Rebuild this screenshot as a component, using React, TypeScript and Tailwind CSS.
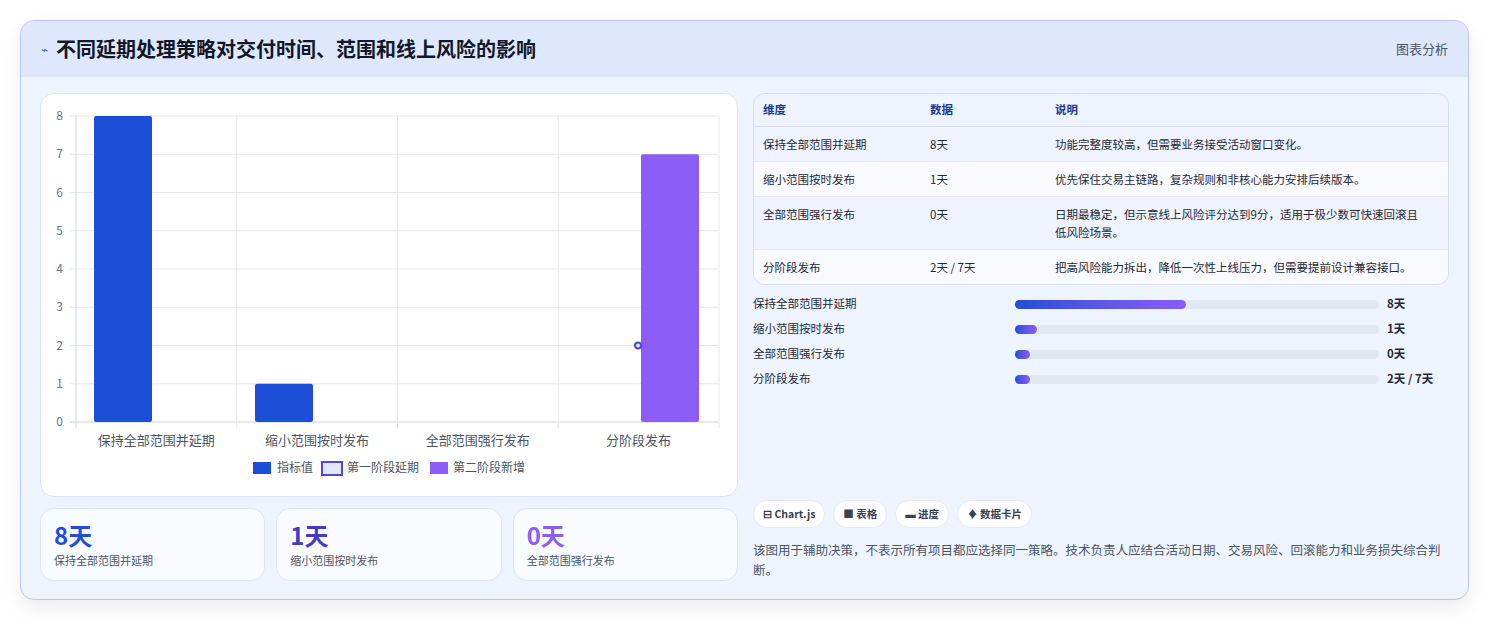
import React from "react";

const F = { fontFamily: '"Noto Sans CJK SC","Noto Sans",sans-serif' };

function Chart() {
  const x0 = 35, x1 = 678, yTop = 22, yBot = 328;
  const unit = (yBot - yTop) / 8;
  const cw = (x1 - x0) / 4;
  const cats = ["保持全部范围并延期", "缩小范围按时发布", "全部范围强行发布", "分阶段发布"];
  return (
    <svg width="697" height="403" style={F}>
      {[0, 1, 2, 3, 4, 5, 6, 7, 8].map((v) => {
        const y = yBot - v * unit;
        return (
          <g key={v}>
            <line x1={x0 - 6} x2={x1} y1={y} y2={y} stroke={v === 0 ? "#cbd5e1" : "#e5e7eb"} />
            <text x={22} y={y + 4} fontSize="12" fill="#6b7280" textAnchor="end">{v}</text>
          </g>
        );
      })}
      {[0, 1, 2, 3, 4].map((i) => (
        <line key={i} x1={x0 + i * cw} x2={x0 + i * cw} y1={yTop} y2={yBot + 6} stroke={i === 0 ? "#cbd5e1" : "#e5e7eb"} />
      ))}
      <rect x={53} y={yBot - 8 * unit} width={58} height={8 * unit} fill="#1d4ed8" rx="2" />
      <rect x={214} y={yBot - 1 * unit} width={58} height={1 * unit} fill="#1d4ed8" rx="2" />
      <rect x={600} y={yBot - 7 * unit} width={58} height={7 * unit} fill="#8b5cf6" rx="2" />
      <circle cx={597} cy={yBot - 2 * unit} r={3} fill="#e0e7ff" stroke="#4f46e5" strokeWidth="2" />
      {cats.map((c, i) => (
        <text key={c} x={x0 + cw * i + cw / 2} y={351} fontSize="13" fill="#4b5563" textAnchor="middle">{c}</text>
      ))}
      <g fontSize="12" fill="#4b5563">
        <rect x={212} y={368} width={18} height={12} fill="#1d4ed8" />
        <text x={236} y={378}>指标值</text>
        <rect x={281} y={368} width={20} height={13} fill="#e0e7ff" stroke="#4f46e5" strokeWidth="2" />
        <text x={306} y={378}>第一阶段延期</text>
        <rect x={389} y={368} width={18} height={12} fill="#8b5cf6" />
        <text x={412} y={378}>第二阶段新增</text>
      </g>
    </svg>
  );
}

const rows = [
  ["保持全部范围并延期", "8天", "功能完整度较高，但需要业务接受活动窗口变化。"],
  ["缩小范围按时发布", "1天", "优先保住交易主链路，复杂规则和非核心能力安排后续版本。"],
  ["全部范围强行发布", "0天", "日期最稳定，但示意线上风险评分达到9分，适用于极少数可快速回滚且低风险场景。"],
  ["分阶段发布", "2天 / 7天", "把高风险能力拆出，降低一次性上线压力，但需要提前设计兼容接口。"],
];

const bars: [string, number, string][] = [
  ["保持全部范围并延期", 47, "8天"],
  ["缩小范围按时发布", 6, "1天"],
  ["全部范围强行发布", 4, "0天"],
  ["分阶段发布", 4, "2天 / 7天"],
];

export default function App() {
  return (
    <div className="w-[1489px] h-[621px] bg-white pt-[20px] px-[20px]" style={F}>
      <div className="w-[1449px] h-[580px] rounded-[14px] border border-[#b9c6ee] bg-[#eef4fe] overflow-hidden shadow-[0_8px_20px_rgba(0,0,0,0.08)]">
        <div className="h-[56px] bg-[#dfe7fd] flex items-center justify-between px-[20px]">
          <div className="flex items-center gap-[8px]">
            <span className="text-[#3b5bdb] text-[12px]">⌁</span>
            <span className="text-[20px] font-bold text-[#111827]">不同延期处理策略对交付时间、范围和线上风险的影响</span>
          </div>
          <span className="text-[13px] text-[#4b5563]">图表分析</span>
        </div>
        <div className="flex gap-[15px] px-[19px] pt-[16px]">
          <div className="w-[698px] flex flex-col gap-[11px]">
            <div className="h-[404px] bg-white rounded-[14px] border border-[#dde5f5]">
              <Chart />
            </div>
            <div className="grid grid-cols-3 gap-[11px]">
              {[["8天", "text-[#1d4ed8]", "保持全部范围并延期"], ["1天", "text-[#4338ca]", "缩小范围按时发布"], ["0天", "text-[#8b5cf6]", "全部范围强行发布"]].map(([v, c, l]) => (
                <div key={l} className="h-[73px] bg-[#f8fbff] rounded-[14px] border border-[#dde5f5] px-[13px] pt-[11px]">
                  <div className={`text-[24px] font-bold leading-[30px] ${c}`}>{v}</div>
                  <div className="text-[11px] text-[#4b5563] mt-[2px]">{l}</div>
                </div>
              ))}
            </div>
          </div>
          <div className="w-[698px] flex flex-col">
            <div className="rounded-[12px] border border-[#d5def0] overflow-hidden text-[11.5px] text-[#1f2937]">
              <div className="flex h-[33px] items-center bg-[#eef3fe] border-b border-[#d5def0] text-[#1e3a8a] font-bold">
                <div className="w-[176px] pl-[9px]">维度</div>
                <div className="w-[125px]">数据</div>
                <div className="flex-1">说明</div>
              </div>
              {rows.map((r, i) => (
                <div key={i} className={`flex py-[8px] ${i % 2 === 0 ? "bg-[#eef3fe]" : "bg-[#f8fafd]"} ${i < 3 ? "border-b border-[#e1e7f3]" : ""}`}>
                  <div className="w-[176px] pl-[9px] leading-[18px]">{r[0]}</div>
                  <div className="w-[125px] leading-[18px]">{r[1]}</div>
                  <div className="flex-1 pr-[22px] leading-[18px]">{r[2]}</div>
                </div>
              ))}
            </div>
            <div className="flex flex-col gap-[7px] mt-[10px]">
              {bars.map(([l, p, v]) => (
                <div key={l} className="flex items-center h-[18px] text-[11.5px] text-[#1f2937]">
                  <div className="w-[262px]">{l}</div>
                  <div className="w-[364px] h-[9px] rounded-full bg-[#e2e8f0]">
                    <div className="h-full rounded-full bg-gradient-to-r from-[#1d4ed8] to-[#8b5cf6]" style={{ width: `${p}%`, minWidth: 14 }} />
                  </div>
                  <div className="ml-[8px] font-bold">{v}</div>
                </div>
              ))}
            </div>
            <div className="flex gap-[8px] mt-[112px] text-[10.5px] font-bold text-[#374151]">
              {["⊟ Chart.js", "■ 表格", "▬ 进度", "♦ 数据卡片"].map((t) => (
                <div key={t} className="h-[28px] px-[9px] flex items-center rounded-full bg-white border border-[#e5eaf3]">{t}</div>
              ))}
            </div>
            <div className="mt-[12px] text-[12.5px] leading-[20px] text-[#4b5563] pr-[4px]">
              该图用于辅助决策，不表示所有项目都应选择同一策略。技术负责人应结合活动日期、交易风险、回滚能力和业务损失综合判断。
            </div>
          </div>
        </div>
      </div>
    </div>
  );
}
